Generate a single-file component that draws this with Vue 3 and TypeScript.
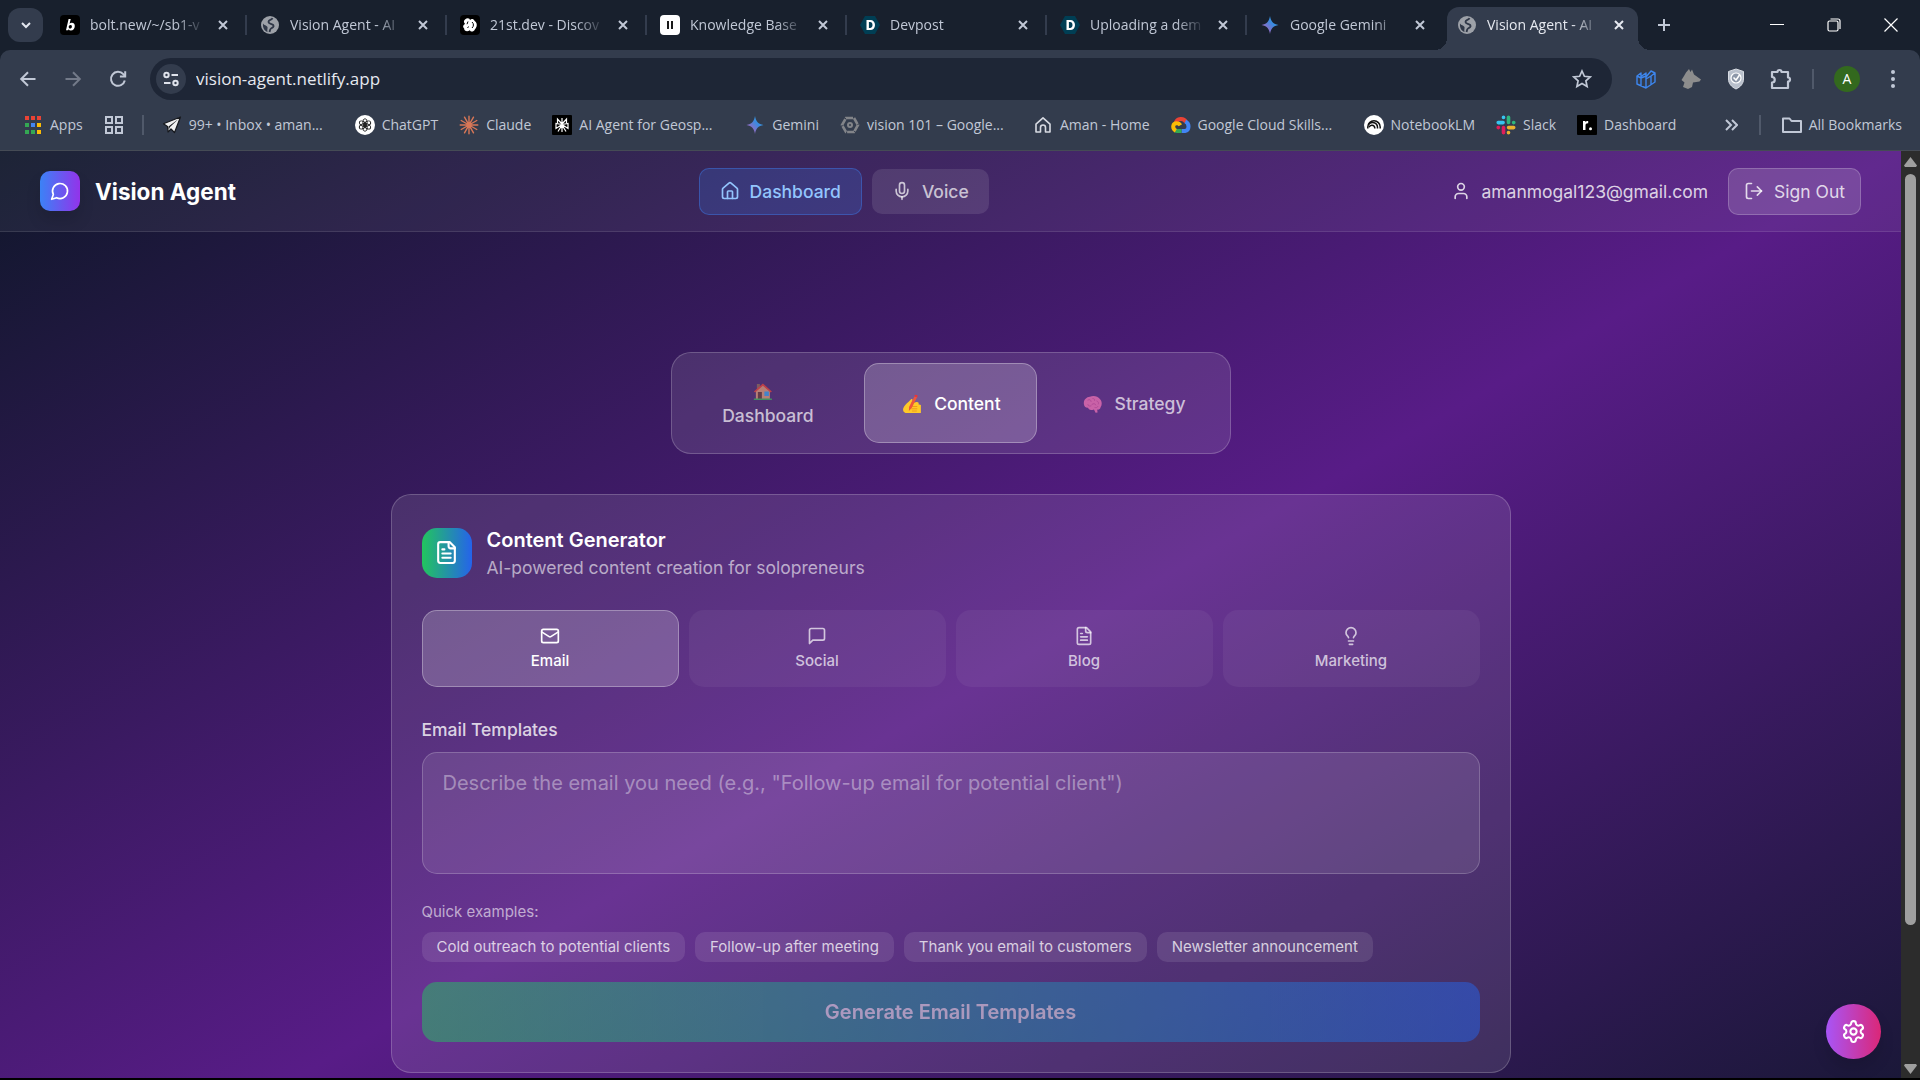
<script setup lang="ts">
import { ref } from 'vue'

interface BrowserTab {
  title: string
  icon: string
  active?: boolean
}

interface Bookmark {
  label: string
  icon: string
  cut?: boolean
}

const glyphs: Record<string, string> = {
  bolt: '<rect width="20" height="20" rx="4" fill="#000"/><path d="M8.6 4 6 15.2h2.2l.4-.9c.5.8 1.2 1.2 2.2 1.2 2.400 0 4-2 4-4.500 0-2-1.200-3.200-3-3.200-.9 0-1.600.3-2.200.9L10.700 4zm1.900 5.900c.9 0 1.400.6 1.400 1.500 0 1.300-.8 2.200-1.800 2.200-.9 0-1.400-.6-1.400-1.500 0-1.300.8-2.200 1.800-2.200z" fill="#fff" fill-rule="evenodd"/>',
  globe: '<circle cx="10" cy="10" r="9" fill="#9da1a8"/><path d="M12.500 3.200C11.500 5.500 8.500 4.500 8.500 7c0 2 3.500 1.500 4.800 3.200 1 1.500-.8 2.600-2.300 3.300-1 .5-.8 1.500-1.500 3.500" fill="none" stroke="#303848" stroke-width="1.900"/><path d="M3 8.500c1.200 2.200 3.500 1.500 4.500 3.500.3 1.500-.5 2.500 0 5C4.500 16 2.500 12.500 3 8.500z" fill="#303848"/>',
  dev21: '<rect width="20" height="20" rx="4" fill="#000"/><path d="M5 4.500c2-2 5-1.500 5 .8 1-1.800 3.600-1.500 4.600.6 3 1.700 2.800 6 .2 8.500-1 2.400-4 2.800-5 .8-2.400 2-5.800.9-5.600-1.700-2-2-.7-3.600.9-4.500C3.500 7.500 3.600 5.500 5 4.500z" fill="#fff"/><path d="M8 6.500 7 9.200M12 7c2 1.500 1.800 4.500 0 6M8.500 11.500 7.600 13" stroke="#000" stroke-width="1" fill="none"/>',
  bars: '<rect width="20" height="20" rx="4" fill="#fff"/><path d="M7 6h2v8H7zM11 6h2v8h-2z" fill="#1a1a1a"/>',
  devpost: '<path d="M5 1h10l5 9-5 9H5l-5-9z" fill="#003e54"/><path d="M6.500 5h3.700c3 0 4.800 2 4.800 5s-1.800 5-4.800 5H6.500zm2.400 2.100v5.800h1.200c1.500 0 2.400-1.100 2.400-2.900s-.9-2.900-2.400-2.900z" fill="#fff" fill-rule="evenodd"/>',
  gemini: '<defs><linearGradient id="gem" x1="0" y1="1" x2="1" y2="0"><stop offset="0" stop-color="#2f7fd8"/><stop offset=".3" stop-color="#8a6fc6"/><stop offset=".6" stop-color="#3a8ae0"/><stop offset="1" stop-color="#37b0e8"/></linearGradient></defs><path d="M10 1c.8 5.300 3.300 8.200 8.500 9-5.200.8-7.700 3.700-8.500 9-.8-5.300-3.300-8.200-8.500-9 5.200-.8 7.700-3.700 8.500-9z" fill="url(#gem)"/>',
  plane: '<path d="M18.500 2 1.500 8.800l4 2.600L6 17l3-3 3.500 3.500z" fill="#f1f1f1" stroke="#16181d" stroke-width="1.200" stroke-linejoin="round"/><path d="M16.500 4 6.500 11.400 6.500 15l1.500-3z" fill="#15171c"/>',
  chatgpt: '<circle cx="10" cy="10" r="10" fill="#fff"/><g fill="none" stroke="#222" stroke-width=".9"><ellipse cx="10" cy="7.300" rx="2.200" ry="3.600"/><ellipse cx="10" cy="7.300" rx="2.200" ry="3.600" transform="rotate(60 10 10)"/><ellipse cx="10" cy="7.300" rx="2.200" ry="3.600" transform="rotate(120 10 10)"/><ellipse cx="10" cy="7.300" rx="2.200" ry="3.600" transform="rotate(180 10 10)"/><ellipse cx="10" cy="7.300" rx="2.200" ry="3.600" transform="rotate(240 10 10)"/><ellipse cx="10" cy="7.300" rx="2.200" ry="3.600" transform="rotate(300 10 10)"/></g>',
  claude: '<g stroke="#d97757" stroke-width="1.400" stroke-linecap="round"><path d="M10 1.200v17.600M1.200 10h17.600M5.500 2.200l9 15.600M14.500 2.200l-9 15.600M2.200 5.500l15.600 9M17.800 5.500l-15.600 9"/></g>',
  agent: '<rect width="20" height="20" rx="1" fill="#000"/><path d="M10 3v14M10 9 5.500 4v4M10 9l4.500-5v4M10 9.500 4 8.500v5l6-4zM10 9.500l6-1v5l-6-4zM10 10l-4 6.500M10 10l4 6.500" fill="none" stroke="#fff" stroke-width="1.200"/>',
  hexagon: '<path d="M6 3h8l4 7-4 7H6l-4-7z" fill="none" stroke="#828489" stroke-width="2.600" stroke-dasharray="7 1"/><circle cx="10" cy="10" r="3" fill="#828489"/><circle cx="10" cy="10" r="1" fill="#333c4d"/>',
  house: '<path d="M3 9.200 10 2.800l7 6.400V17h-4.500v-4.500a2.500 2.500 0 0 0-5 0V17H3z" fill="none" stroke="#d7dae2" stroke-width="1.600" stroke-linejoin="round"/>',
  cloud: '<g fill="none" stroke-width="4"><path d="M5 7.500C6 3.500 12.500 2.500 15 7" stroke="#ea4335"/><path d="M14.300 6.500c4.500 2 4.200 8.800-.3 9.500h-3.500" stroke="#4285f4"/><path d="M10.500 16H6.200c-1 0-1.500-.2-2-.5" stroke="#34a853"/><path d="M4.800 15.800C1 13.500 1.500 8 6 8.200c1.800 0 2.800 1 3.400 2" stroke="#fbbc05"/></g>',
  notebook: '<circle cx="10" cy="10" r="10" fill="#fff"/><g fill="none" stroke="#111" stroke-width="1.500"><path d="M3.800 13.500V12a6.200 6.200 0 0 1 12.400 0v1.500"/><path d="M4.500 9.500a5 5 0 0 1 9 3v1M5 12.300a3 3 0 0 1 5.800.6v.6"/></g>',
  slack: '<g stroke-width="3.600" stroke-linecap="round"><path d="M2.200 7.600h4.900M7.500 2.200v.2" stroke="#36c5f0"/><path d="M12.500 2.200v5.200M17.800 7.600h-.2" stroke="#2eb67d"/><path d="M12.600 12.600h5.100M12.500 17.800v-.2" stroke="#ecb22e"/><path d="M7.500 12.600v5.100M2.200 12.600h.2" stroke="#e01e5a"/></g>',
  rdot: '<rect width="20" height="20" rx="1" fill="#000"/><path d="M6 15V6h2.400v1.300C9 6.300 9.800 5.900 11.200 6v2.300C9.400 8.200 8.500 9 8.500 10.700V15z" fill="#fff"/><circle cx="13.500" cy="13.700" r="1.500" fill="#fff"/>',
}

const tabs: BrowserTab[] = [
  { title: 'bolt.new/~/sb1-v', icon: 'bolt' },
  { title: 'Vision Agent - AI', icon: 'globe' },
  { title: '21st.dev - Discov', icon: 'dev21' },
  { title: 'Knowledge Base', icon: 'bars' },
  { title: 'Devpost', icon: 'devpost' },
  { title: 'Uploading a dem', icon: 'devpost' },
  { title: 'Google Gemini', icon: 'gemini' },
  { title: 'Vision Agent - AI', icon: 'globe', active: true },
]

const bookmarks: Bookmark[] = [
  { label: '99+ • Inbox • aman...', icon: 'plane', cut: true },
  { label: 'ChatGPT', icon: 'chatgpt' },
  { label: 'Claude', icon: 'claude' },
  { label: 'AI Agent for Geosp...', icon: 'agent', cut: true },
  { label: 'Gemini', icon: 'gemini' },
  { label: 'vision 101 – Google...', icon: 'hexagon', cut: true },
  { label: 'Aman - Home', icon: 'house' },
  { label: 'Google Cloud Skills...', icon: 'cloud', cut: true },
  { label: 'NotebookLM', icon: 'notebook' },
  { label: 'Slack', icon: 'slack' },
  { label: 'Dashboard', icon: 'rdot' },
]

const fileText =
  '<path d="M15 2H6a2 2 0 0 0-2 2v16a2 2 0 0 0 2 2h12a2 2 0 0 0 2-2V7Z"/><path d="M14 2v4a2 2 0 0 0 2 2h4"/><path d="M10 9H8"/><path d="M16 13H8"/><path d="M16 17H8"/>'

const kinds = [
  { name: 'Email', icon: '<rect width="20" height="16" x="2" y="4" rx="2"/><path d="m22 7-8.970 5.700a1.940 1.940 0 0 1-2.060 0L2 7"/>' },
  { name: 'Social', icon: '<path d="M21 15a2 2 0 0 1-2 2H7l-4 4V5a2 2 0 0 1 2-2h14a2 2 0 0 1 2 2z"/>' },
  { name: 'Blog', icon: fileText },
  { name: 'Marketing', icon: '<path d="M15 14c.2-1 .7-1.700 1.500-2.500 1-.9 1.500-2.200 1.500-3.500A6 6 0 0 0 6 8c0 1 .2 2.200 1.500 3.500.7.7 1.300 1.500 1.500 2.500"/><path d="M9 18h6"/><path d="M10 22h4"/>' },
]

const sections = [
  {
    name: 'Dashboard',
    icon: '<path d="M4 3h3v6H4z" fill="#8d6a5c"/><path d="M3 10 10 4l7 6v8H3z" fill="#d99a78"/><path d="M1 10.500 10 2.500l9 8-1.200 1L10 4.800l-7.800 6.700z" fill="#e5453b"/><path d="M5 11h4v7H5z" fill="#6b3f3a"/><path d="M11.500 10.500H16V15h-4.500z" fill="#3f9fe8"/><path d="M1 17.500h18V19H1z" fill="#3fae5a"/>',
  },
  {
    name: 'Content',
    icon: '<path d="M1.500 14c1-2.500 3-4.500 5-6L9 5.500c1-1 2.200 0 1.600 1.300L9.500 9.500l5-1.500c2-.2 3 1 2 2.200l2.500.8v8H4.500C2 19 .5 16.500 1.500 14z" fill="#ffc928"/><path d="M10 12.500h5M10 14.800h5M10.500 17h4" stroke="#f09a1c" stroke-width="1" stroke-linecap="round"/><path d="m12.500 2.500 2.700.7L9.800 14l-2.800 3 .2-4z" fill="#f0553c"/><path d="m12.300 1.800 1.500-1 1.900.8-.3 1.900z" fill="#f8312f"/>',
  },
  {
    name: 'Strategy',
    icon: '<path d="M1 10C.5 6 3.500 3 7 2.800c3.500-1.800 8-.6 10 2.200 2.300 2 2.300 6 .8 8-.4 2-2 3-3.500 2.600l.4 3-2 .2-1.600-3.400C7.500 16.700 5.500 15.500 5.200 13.800 2.700 14 1.200 12.300 1 10z" fill="#ee72b4"/><path d="M5 6c2-1 3 0 3.200 1.500M8 12c-2 .5-3-.5-3-1.500M10 4.500c1.500 0 2 1 1.800 2M14 7c1.500.5 2 1.700 1.500 3M9 10.500c1.500-1.500 3.500-1 4 .5M12 13.500c1.500.5 2.600 0 3-1" fill="none" stroke="#d0559f" stroke-width="1" stroke-linecap="round"/>',
  },
]

const examples = [
  'Cold outreach to potential clients',
  'Follow-up after meeting',
  'Thank you email to customers',
  'Newsletter announcement',
]

const section = ref('Content')
const kind = ref('Email')
const prompt = ref('')
const address = ref('vision-agent.netlify.app')
</script>

<template>
  <div class="window">
    <header class="chrome">
      <div class="strip">
        <button class="tab-search" aria-label="Search tabs">
          <svg width="12" height="12" viewBox="0 0 12 12" fill="none" stroke="currentColor" stroke-width="2"><path d="m2 4 4 4 4-4" /></svg>
        </button>
        <div class="tabs">
          <div v-for="(tab, i) in tabs" :key="i" class="tab" :class="{ active: tab.active, last: i === 6 }">
            <svg class="fav" viewBox="0 0 20 20" v-html="glyphs[tab.icon]"></svg>
            <span class="tab-title">{{ tab.title }}</span>
            <button class="tab-close" aria-label="Close tab">
              <svg width="10" height="10" viewBox="0 0 10 10" stroke="currentColor" stroke-width="2"><path d="m1 1 8 8M9 1 1 9" /></svg>
            </button>
          </div>
        </div>
        <button class="new-tab" aria-label="New tab">
          <svg width="14" height="14" viewBox="0 0 14 14" stroke="currentColor" stroke-width="2"><path d="M7 1v12M1 7h12" /></svg>
        </button>
        <div class="win-controls">
          <button aria-label="Minimize"><svg width="14" height="14" viewBox="0 0 14 14" stroke="currentColor"><path d="M0 6.500h14" /></svg></button>
          <button aria-label="Restore">
            <svg width="14" height="14" viewBox="0 0 14 14" fill="none" stroke="currentColor" stroke-width="1.200"><rect x="1" y="3" width="10" height="10" rx="1.500" /><path d="M3.500 1H11a2 2 0 0 1 2 2v8" /></svg>
          </button>
          <button aria-label="Close"><svg width="14" height="14" viewBox="0 0 14 14" stroke="currentColor" stroke-width="1.200"><path d="m.5.5 13 13M13.500.5l-13 13" /></svg></button>
        </div>
      </div>

      <div class="toolbar">
        <div class="nav-buttons">
          <button aria-label="Back"><svg width="20" height="20" viewBox="0 0 20 20" fill="none" stroke="currentColor" stroke-width="2"><path d="M17.500 10H3.500M10 3.200 3.200 10l6.800 6.800" /></svg></button>
          <button class="dim" aria-label="Forward"><svg width="20" height="20" viewBox="0 0 20 20" fill="none" stroke="currentColor" stroke-width="2"><path d="M2.500 10h14M10 3.200l6.800 6.800-6.800 6.800" /></svg></button>
          <button aria-label="Reload"><svg width="20" height="20" viewBox="0 0 20 20" fill="none" stroke="currentColor" stroke-width="2"><path d="M16.800 11.500A7 7 0 1 1 15.300 5.200L17 7" /><path d="M17.200 2.200V7.500h-5.300" /></svg></button>
        </div>
        <div class="omnibox">
          <button class="site-info" aria-label="Site information">
            <svg width="18" height="18" viewBox="0 0 18 18" fill="none" stroke="currentColor" stroke-width="2"><circle cx="4.500" cy="5" r="2.200" /><path d="M9.500 5H16M2 13h6.500" /><circle cx="13.500" cy="13" r="2.200" /></svg>
          </button>
          <input v-model="address" aria-label="Address" spellcheck="false" />
          <button class="star" aria-label="Bookmark this page">
            <svg width="20" height="20" viewBox="0 0 20 20" fill="none" stroke="currentColor" stroke-width="1.700"><path d="m10 2 2.400 5.300 5.800.6-4.300 3.900 1.200 5.700-5.100-2.900-5.100 2.900 1.200-5.700L1.800 7.900l5.800-.6z" /></svg>
          </button>
        </div>
        <div class="extensions">
          <button aria-label="Cube extension"><svg width="22" height="22" viewBox="0 0 22 22" fill="none" stroke="#3d86ee" stroke-width="1.400" stroke-linejoin="round"><path d="M2 8l4-3v3.500L11 5v4l5-6 4 2v9l-9 6-9-4zM2 8l4 2v8M6 10l5-2v12M11 11l5-3v9M16 8l4-3" /></svg></button>
          <button aria-label="Wolf extension"><svg width="22" height="22" viewBox="0 0 22 22" fill="#8d8d8d"><path d="m9 1 1.500 3L12 1.500l2 5 7 5-1.500 2-6.500 1-1 4.500-4 2-5-2 1.500-4.500L1.500 12 4 8l2-3.500z" /></svg></button>
          <button aria-label="Shield extension"><svg width="22" height="22" viewBox="0 0 22 22"><path d="m11 1 7.500 2.500V11c0 4.500-3 8-7.500 10-4.500-2-7.500-5.500-7.500-10V3.500z" fill="#b9c0cc" stroke="#d8dce3" /><circle cx="11" cy="10" r="5" fill="#8d97a8" stroke="#fff" stroke-width="1.200" /><path d="M8.500 9.500 11 12l3.500-5" fill="none" stroke="#fff" stroke-width="1.500" /></svg></button>
          <button aria-label="Extensions"><svg width="22" height="24" viewBox="0 0 22 24" fill="none" stroke="currentColor" stroke-width="2.200" stroke-linejoin="round"><path d="M2 5h5.500a2 2 0 0 1 4 0H18v5.500a2 2 0 0 1 0 4V21H2v-5.500a2.700 2.700 0 0 0 0-5.500z" /></svg></button>
          <i class="rule"></i>
          <button class="avatar" aria-label="Profile">A</button>
          <button aria-label="Menu"><svg width="20" height="20" viewBox="0 0 20 20" fill="currentColor"><circle cx="10" cy="3" r="2" /><circle cx="10" cy="10" r="2" /><circle cx="10" cy="17" r="2" /></svg></button>
        </div>
      </div>

      <nav class="bookmarks" aria-label="Bookmarks">
        <a href="#" class="bookmark">
          <svg class="fav" viewBox="0 0 20 20"><path d="M2 1h4v4H2zM8 1h4v4H8zM14 1h4v4h-4z" fill="#ea4335" /><path d="M2 8h4v4H2zM2 15h4v4H2z" fill="#34a853" /><path d="M8 8h4v4H8z" fill="#4285f4" /><path d="M14 8h4v4h-4zM14 15h4v4h-4z" fill="#fbbc05" /><path d="M8 15h4v4H8z" fill="#34a853" /></svg>
          <span>Apps</span>
        </a>
        <a href="#" class="bookmark" aria-label="Tab groups">
          <svg class="fav" viewBox="0 0 20 20" fill="none" stroke="currentColor" stroke-width="2"><path d="M2 2h6v6H2zM12 2h6v6h-6zM2 12h6v6H2zM12 12h6v6h-6z" /></svg>
        </a>
        <i class="rule"></i>
        <a v-for="b in bookmarks" :key="b.label" href="#" class="bookmark">
          <svg class="fav" viewBox="0 0 20 20" v-html="glyphs[b.icon]"></svg>
          <span :class="{ cut: b.cut }">{{ b.label }}</span>
        </a>
        <div class="bookmarks-end">
          <button aria-label="More bookmarks"><svg width="14" height="12" viewBox="0 0 14 12" fill="none" stroke="currentColor" stroke-width="2"><path d="m2 1 5 5-5 5M8 1l5 5-5 5" /></svg></button>
          <i class="rule"></i>
          <a href="#" class="bookmark">
            <svg class="fav" viewBox="0 0 20 20" fill="none" stroke="currentColor" stroke-width="2" stroke-linejoin="round"><path d="M1 3.500h6.500l2 2.500H19v11H1z" /></svg>
            <span>All Bookmarks</span>
          </a>
        </div>
      </nav>
    </header>

    <div class="viewport">
      <div class="screen">
        <div class="page">
          <header class="app-bar">
            <div class="brand">
              <span class="brand-mark"><svg class="i16" viewBox="0 0 24 24"><path d="M7.900 20A9 9 0 1 0 4 16.100L2 22Z" /></svg></span>
              <h1>Vision Agent</h1>
            </div>
            <nav class="app-nav">
              <button class="current">
                <svg class="i16" viewBox="0 0 24 24"><path d="M15 21v-8a1 1 0 0 0-1-1h-4a1 1 0 0 0-1 1v8" /><path d="M3 10a2 2 0 0 1 .709-1.528l7-5.999a2 2 0 0 1 2.582 0l7 5.999A2 2 0 0 1 21 10v9a2 2 0 0 1-2 2H5a2 2 0 0 1-2-2z" /></svg>
                Dashboard
              </button>
              <button>
                <svg class="i16" viewBox="0 0 24 24"><path d="M12 2a3 3 0 0 0-3 3v7a3 3 0 0 0 6 0V5a3 3 0 0 0-3-3Z" /><path d="M19 10v2a7 7 0 0 1-14 0v-2" /><path d="M12 19v3" /></svg>
                Voice
              </button>
            </nav>
            <div class="account">
              <span class="user">
                <svg class="i16" viewBox="0 0 24 24"><path d="M19 21v-2a4 4 0 0 0-4-4H9a4 4 0 0 0-4 4v2" /><circle cx="12" cy="7" r="4" /></svg>
                amanmogal123@gmail.com
              </span>
              <button class="sign-out">
                <svg class="i16" viewBox="0 0 24 24"><path d="M9 21H5a2 2 0 0 1-2-2V5a2 2 0 0 1 2-2h4" /><path d="m16 17 5-5-5-5" /><path d="M21 12H9" /></svg>
                Sign Out
              </button>
            </div>
          </header>

          <main class="content">
            <div class="sections">
              <button v-for="s in sections" :key="s.name" :class="{ chosen: section === s.name }" @click="section = s.name">
                <svg class="emoji" viewBox="0 0 20 20" v-html="s.icon"></svg><wbr />{{ s.name }}
              </button>
            </div>

            <section class="card">
              <div class="card-head">
                <span class="card-mark"><svg class="i20" viewBox="0 0 24 24" v-html="fileText"></svg></span>
                <div>
                  <h2>Content Generator</h2>
                  <p>AI-powered content creation for solopreneurs</p>
                </div>
              </div>

              <div class="kinds">
                <button v-for="k in kinds" :key="k.name" :class="{ chosen: kind === k.name }" @click="kind = k.name">
                  <svg class="i16" viewBox="0 0 24 24" v-html="k.icon"></svg>
                  {{ k.name }}
                </button>
              </div>

              <label for="prompt">Email Templates</label>
              <textarea id="prompt" v-model="prompt" rows="3" placeholder='Describe the email you need (e.g., "Follow-up email for potential client")'></textarea>

              <p class="hint">Quick examples:</p>
              <div class="chips">
                <button v-for="e in examples" :key="e" @click="prompt = e">{{ e }}</button>
              </div>

              <button class="generate" :disabled="!prompt">Generate Email Templates</button>
            </section>
          </main>
        </div>
        <button class="fab" aria-label="Settings">
          <svg class="i20" viewBox="0 0 24 24"><path d="M12.220 2h-.440a2 2 0 0 0-2 2v.180a2 2 0 0 1-1 1.730l-.430.250a2 2 0 0 1-2 0l-.150-.080a2 2 0 0 0-2.730.730l-.220.380a2 2 0 0 0 .730 2.730l.150.100a2 2 0 0 1 1 1.720v.510a2 2 0 0 1-1 1.740l-.150.090a2 2 0 0 0-.730 2.730l.220.380a2 2 0 0 0 2.730.730l.150-.080a2 2 0 0 1 2 0l.430.250a2 2 0 0 1 1 1.730V20a2 2 0 0 0 2 2h.440a2 2 0 0 0 2-2v-.180a2 2 0 0 1 1-1.730l.430-.250a2 2 0 0 1 2 0l.150.080a2 2 0 0 0 2.730-.730l.220-.390a2 2 0 0 0-.730-2.730l-.150-.080a2 2 0 0 1-1-1.740v-.500a2 2 0 0 1 1-1.740l.150-.090a2 2 0 0 0 .730-2.730l-.220-.380a2 2 0 0 0-2.730-.730l-.150.080a2 2 0 0 1-2 0l-.430-.250a2 2 0 0 1-1-1.730V4a2 2 0 0 0-2-2z" /><circle cx="12" cy="12" r="3" /></svg>
        </button>
      </div>
      <div class="scrollbar" aria-hidden="true">
        <svg width="13" height="10" viewBox="0 0 13 10" fill="#9f9f9f"><path d="M6.500 0 13 8.500 12 10H1L0 8.500z" /></svg>
        <div class="track"><div class="thumb"></div></div>
        <svg width="13" height="10" viewBox="0 0 13 10" fill="#9f9f9f"><path d="M6.500 10 13 1.500 12 0H1L0 1.500z" /></svg>
      </div>
    </div>
  </div>
</template>

<style>
body {
  margin: 0;
  background: #000;
}
</style>

<style scoped>
* {
  box-sizing: border-box;
}
button,
input,
textarea {
  font: inherit;
  color: inherit;
  border: 0;
  background: none;
  padding: 0;
  margin: 0;
}
button {
  display: flex;
  align-items: center;
  justify-content: center;
}
a {
  color: inherit;
  text-decoration: none;
}
h1,
h2,
p {
  margin: 0;
}
svg {
  flex: none;
}
.window {
  display: flex;
  flex-direction: column;
  height: 100vh;
  padding-bottom: 2px;
  overflow: hidden;
  background: #000;
}

/* browser frame */
.chrome {
  flex: none;
  background: #18202d;
  color: #c1c8d6;
  font: 14px/20px 'Open Sans', 'Noto Sans', sans-serif;
  border-bottom: 1px solid #454b55;
}
.strip {
  display: flex;
  align-items: center;
  height: 50px;
  padding-left: 8px;
}
.tab-search {
  width: 35px;
  height: 34px;
  margin-right: 4px;
  border-radius: 12px;
  background: #333c4d;
  color: #e3e7ef;
}
.tabs {
  display: flex;
  align-self: stretch;
  min-width: 0;
}
.tab {
  display: flex;
  align-items: center;
  width: 200px;
  min-width: 0;
  padding: 0 14px 0 13px;
  position: relative;
}
.tab::after {
  content: '';
  position: absolute;
  right: 0;
  top: 15px;
  width: 2px;
  height: 20px;
  background: #333c4d;
}
.tab.last::after,
.tab.active::after {
  display: none;
}
.tab.last {
  padding-right: 17px;
}
.fav {
  width: 20px;
  height: 20px;
}
.tab-title {
  flex: 1;
  min-width: 0;
  margin: 0 8px 0 10px;
  overflow: hidden;
  white-space: nowrap;
  -webkit-mask-image: linear-gradient(90deg, #000 75%, transparent);
  mask-image: linear-gradient(90deg, #000 75%, transparent);
}
.tab-close {
  width: 20px;
  height: 20px;
}
.tab.active {
  width: 191px;
  margin-top: 7px;
  padding: 0 9px 7px 10px;
  border-radius: 12px 12px 0 0;
  background: #333c4d;
  color: #e6e9f0;
}
.tab.active::before {
  content: '';
  position: absolute;
  left: -12px;
  right: -12px;
  bottom: 0;
  height: 12px;
  background:
    radial-gradient(circle at 0 0, transparent 12px, #333c4d 12px) left / 12px 12px no-repeat,
    radial-gradient(circle at 100% 0, transparent 12px, #333c4d 12px) right / 12px 12px no-repeat;
}
.new-tab {
  width: 34px;
  height: 34px;
  margin-left: 9px;
}
.win-controls {
  display: flex;
  margin-left: auto;
  padding-right: 1px;
  color: #fff;
}
.win-controls button {
  width: 57px;
  height: 48px;
}
.toolbar {
  display: flex;
  align-items: center;
  height: 51px;
  padding-top: 7px;
  border-radius: 10px 10px 0 0;
  background: #333c4d;
}
.nav-buttons {
  display: flex;
  width: 150px;
  padding-left: 5px;
}
.nav-buttons button {
  width: 45px;
}
.dim {
  color: #737a89;
}
.omnibox {
  display: flex;
  align-items: center;
  flex: 1;
  height: 42px;
  padding: 0 20px 0 6px;
  border-radius: 21px;
  background: #1e2636;
}
.site-info {
  width: 30px;
  height: 30px;
  border-radius: 50%;
  background: #333c4d;
  color: #dfe3ec;
}
.omnibox input {
  flex: 1;
  min-width: 0;
  padding: 0 10px;
  font-size: 17px;
  line-height: 24px;
  color: #e6e9f0;
  outline: none;
}
.extensions {
  display: flex;
  align-items: center;
  width: 308px;
  padding-left: 11px;
}
.extensions button {
  width: 45px;
}
.rule {
  flex: none;
  width: 2px;
  height: 20px;
  background: #50596a;
}
.extensions .rule {
  margin: 0 9px;
}
.extensions .avatar {
  width: 26px;
  height: 26px;
  margin: 0 10px 0 11px;
  border-radius: 50%;
  background: #33691e;
  color: #fff;
}
.bookmarks {
  display: flex;
  align-items: center;
  gap: 21px;
  height: 49px;
  padding: 0 18px 2px 23px;
  background: #333c4d;
  white-space: nowrap;
}
.bookmarks > .rule {
  margin: 0 -3px;
}
.bookmark {
  display: flex;
  flex: none;
  align-items: center;
  gap: 7px;
}
.cut {
  width: 145px;
}
.bookmarks-end {
  display: flex;
  align-items: center;
  gap: 21px;
  margin-left: auto;
}

/* web page, shown at the display's 125% scale */
.viewport {
  flex: 1;
  min-height: 0;
  display: flex;
}
.screen {
  flex: 1;
  min-width: 0;
  position: relative;
  overflow: hidden;
}
.page {
  zoom: 1.25;
  background: linear-gradient(to bottom right, #0f172a, #581c87, #0f172a);
  color: #fff;
  font: 14px/20px Inter, sans-serif;
}
.i16,
.i20 {
  width: 16px;
  height: 16px;
  fill: none;
  stroke: currentColor;
  stroke-width: 2;
  stroke-linecap: round;
  stroke-linejoin: round;
}
.i20 {
  width: 20px;
  height: 20px;
}
.app-bar {
  display: flex;
  align-items: center;
  justify-content: space-between;
  height: 65px;
  padding: 0 32px;
  background: rgba(255, 255, 255, 0.06);
  border-bottom: 1px solid rgba(255, 255, 255, 0.1);
}
.brand {
  display: flex;
  align-items: center;
  gap: 12px;
}
.brand-mark {
  display: grid;
  place-items: center;
  width: 32px;
  height: 32px;
  border-radius: 8px;
  background: linear-gradient(to right, #3b82f6, #9333ea);
  box-shadow: 0 8px 12px rgba(0, 0, 0, 0.12);
}
h1 {
  font-size: 18px;
  line-height: 28px;
  font-weight: 700;
}
.app-nav {
  display: flex;
  align-items: center;
  gap: 8px;
  font-weight: 500;
}
.app-nav button {
  gap: 8px;
  padding: 8px 16px;
  border-radius: 8px;
  background: rgba(255, 255, 255, 0.1);
  color: rgba(255, 255, 255, 0.7);
}
.app-nav .current {
  background: rgba(59, 130, 246, 0.2);
  border: 1px solid rgba(59, 130, 246, 0.4);
  color: #93c5fd;
}
.account {
  display: flex;
  align-items: center;
  gap: 16px;
  color: rgba(255, 255, 255, 0.8);
}
.user {
  display: flex;
  align-items: center;
  gap: 8px;
}
.sign-out {
  gap: 8px;
  padding: 8px 12px;
  border: 1px solid rgba(255, 255, 255, 0.2);
  border-radius: 8px;
  background: rgba(255, 255, 255, 0.15);
}
.content {
  padding: 96px 24px 140px;
}
.sections {
  display: grid;
  grid-template-columns: repeat(3, 1fr);
  gap: 8px;
  max-width: 448px;
  margin: 0 auto 32px;
  padding: 8px;
  border: 1px solid rgba(255, 255, 255, 0.2);
  border-radius: 16px;
  background: rgba(255, 255, 255, 0.1);
}
.sections button {
  display: block;
  padding: 12px 24px;
  border-radius: 12px;
  font-weight: 500;
  text-align: center;
  color: rgba(255, 255, 255, 0.7);
}
.emoji {
  width: 19px;
  height: 16px;
  margin-right: 8px;
  vertical-align: -3px;
  opacity: 0.75;
}
.sections .chosen {
  border: 1px solid rgba(255, 255, 255, 0.3);
  background: rgba(255, 255, 255, 0.2);
  color: #fff;
}
.chosen .emoji {
  opacity: 1;
}
.card {
  max-width: 896px;
  margin: 0 auto;
  padding: 24px;
  border: 1px solid rgba(255, 255, 255, 0.2);
  border-radius: 16px;
  background: rgba(255, 255, 255, 0.1);
}
.card-head {
  display: flex;
  align-items: center;
  gap: 12px;
  margin-bottom: 24px;
}
.card-mark {
  display: grid;
  place-items: center;
  width: 40px;
  height: 40px;
  border-radius: 12px;
  background: linear-gradient(to right, #22c55e, #2563eb);
}
h2 {
  font-size: 16px;
  line-height: 24px;
  font-weight: 600;
}
.card-head p {
  color: rgba(255, 255, 255, 0.6);
}
.kinds {
  display: grid;
  grid-template-columns: repeat(4, 1fr);
  gap: 8px;
  margin-bottom: 24px;
  font-size: 12px;
  line-height: 16px;
  font-weight: 500;
}
.kinds button {
  flex-direction: column;
  gap: 4px;
  padding: 12px;
  border: 1px solid transparent;
  border-radius: 12px;
  background: rgba(255, 255, 255, 0.05);
  color: rgba(255, 255, 255, 0.7);
}
.kinds .chosen {
  border-color: rgba(255, 255, 255, 0.3);
  background: rgba(255, 255, 255, 0.2);
  color: #fff;
}
label {
  display: block;
  margin-bottom: 8px;
  font-weight: 500;
  color: rgba(255, 255, 255, 0.8);
}
textarea {
  display: block;
  width: 100%;
  padding: 12px 16px;
  border: 1px solid rgba(255, 255, 255, 0.2);
  border-radius: 12px;
  background: rgba(255, 255, 255, 0.1);
  font-size: 16px;
  line-height: 24px;
  resize: none;
}
textarea::placeholder {
  color: rgba(255, 255, 255, 0.4);
}
.hint {
  margin: 22px 0 8px;
  font-size: 12px;
  line-height: 16px;
  color: rgba(255, 255, 255, 0.6);
}
.chips {
  display: flex;
  flex-wrap: wrap;
  gap: 8px;
  margin-bottom: 16px;
  font-size: 12px;
  line-height: 16px;
}
.chips button {
  padding: 4px 12px;
  border-radius: 8px;
  background: rgba(255, 255, 255, 0.1);
  color: rgba(255, 255, 255, 0.75);
}
.generate {
  width: 100%;
  padding: 12px;
  border-radius: 12px;
  background: linear-gradient(to right, #22c55e, #2563eb);
  font-size: 16px;
  line-height: 24px;
  font-weight: 600;
}
.generate:disabled {
  opacity: 0.5;
}
.fab {
  zoom: 1.25;
  position: absolute;
  right: 16px;
  bottom: 15px;
  width: 44px;
  height: 44px;
  border-radius: 50%;
  background: linear-gradient(to right, #a855f7, #db2777);
  color: #fff;
  box-shadow: 0 8px 12px rgba(0, 0, 0, 0.12);
}
.scrollbar {
  display: flex;
  flex-direction: column;
  align-items: center;
  gap: 7px;
  width: 19px;
  padding: 6px 0 4px;
  background: #2c2c2c;
}
.track {
  flex: 1;
}
.thumb {
  width: 11px;
  height: 85%;
  border-radius: 6px;
  background: #9f9f9f;
}
</style>
